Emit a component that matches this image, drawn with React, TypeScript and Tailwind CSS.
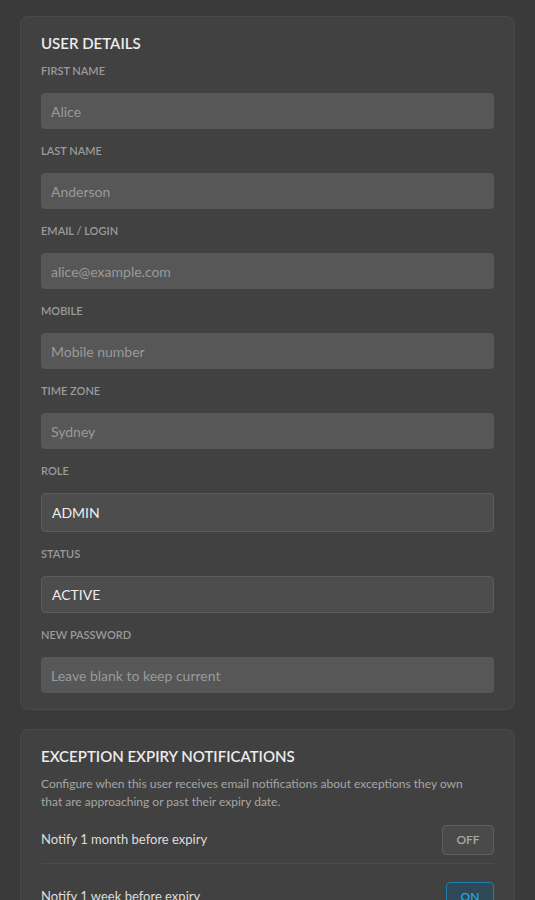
import React from 'react';

const fields = [
  { label: 'First Name', placeholder: 'Alice' },
  { label: 'Last Name', placeholder: 'Anderson' },
  { label: 'Email / Login', placeholder: 'alice@example.com' },
  { label: 'Mobile', placeholder: 'Mobile number' },
  { label: 'Time Zone', placeholder: 'Sydney' },
];

const Label: React.FC<{ children: React.ReactNode }> = ({ children }) => (
  <div className="text-[11px] leading-4 font-semibold uppercase text-[#9b9b9b] mb-[14px]">{children}</div>
);

const App: React.FC = () => {
  return (
    <div className="min-h-screen bg-[#3a3a3a] px-5 pt-4 pb-8" style={{ fontFamily: 'Lato, "Noto Sans", sans-serif' }}>
      <div className="rounded-lg border border-[#4a4a4a] bg-[#414141] px-5 pt-4 pb-4">
        <h2 className="text-[15px] leading-5 font-semibold text-[#ececec] mb-2.5">USER DETAILS</h2>

        {fields.map((f) => (
          <div key={f.label} className="mb-[14px]">
            <Label>{f.label}</Label>
            <input
              disabled
              placeholder={f.placeholder}
              className="w-full h-9 rounded bg-[#575757] px-2.5 text-sm text-[#9a9a9a] placeholder:text-[#9a9a9a] outline-none"
            />
          </div>
        ))}

        <div className="mb-[14px]">
          <Label>Role</Label>
          <div className="h-[39px] rounded border border-[#5c5c5c] bg-[#4d4d4d] px-2.5 flex items-center text-sm text-[#ececec]">
            ADMIN
          </div>
        </div>

        <div className="mb-[14px]">
          <Label>Status</Label>
          <div className="h-[37px] rounded border border-[#5c5c5c] bg-[#4d4d4d] px-2.5 flex items-center text-sm text-[#ececec]">
            ACTIVE
          </div>
        </div>

        <div>
          <Label>New Password</Label>
          <input
            disabled
            placeholder="Leave blank to keep current"
            className="w-full h-9 rounded bg-[#575757] px-2.5 text-sm text-[#9a9a9a] placeholder:text-[#9a9a9a] outline-none"
          />
        </div>
      </div>

      <div className="mt-[19px] rounded-lg border border-[#4a4a4a] bg-[#414141] px-5 pt-4 pb-4">
        <h2 className="text-[15px] leading-5 font-semibold text-[#ececec] mb-[9px]">EXCEPTION EXPIRY NOTIFICATIONS</h2>
        <p className="text-xs leading-[18px] text-[#a6a6a6] mb-[14px] pr-4">
          Configure when this user receives email notifications about exceptions they own that are approaching or past their expiry date.
        </p>

        <div className="flex items-center justify-between pb-2 border-b border-[#4c4c4c]">
          <span className="text-[13px] text-[#dddddd]">Notify 1 month before expiry</span>
          <button className="h-[30px] w-[52px] rounded border border-[#5e5e5e] bg-[#4a4a4a] text-xs font-semibold text-[#a8a8a8]">
            OFF
          </button>
        </div>

        <div className="flex items-center justify-between pt-[18px] pb-2">
          <span className="text-[13px] text-[#dddddd]">Notify 1 week before expiry</span>
          <button className="h-[30px] w-12 rounded border border-[#1f7fae] bg-[#2e4858] text-xs font-semibold text-[#2aa6e6]">
            ON
          </button>
        </div>
      </div>
    </div>
  );
};

export default App;
